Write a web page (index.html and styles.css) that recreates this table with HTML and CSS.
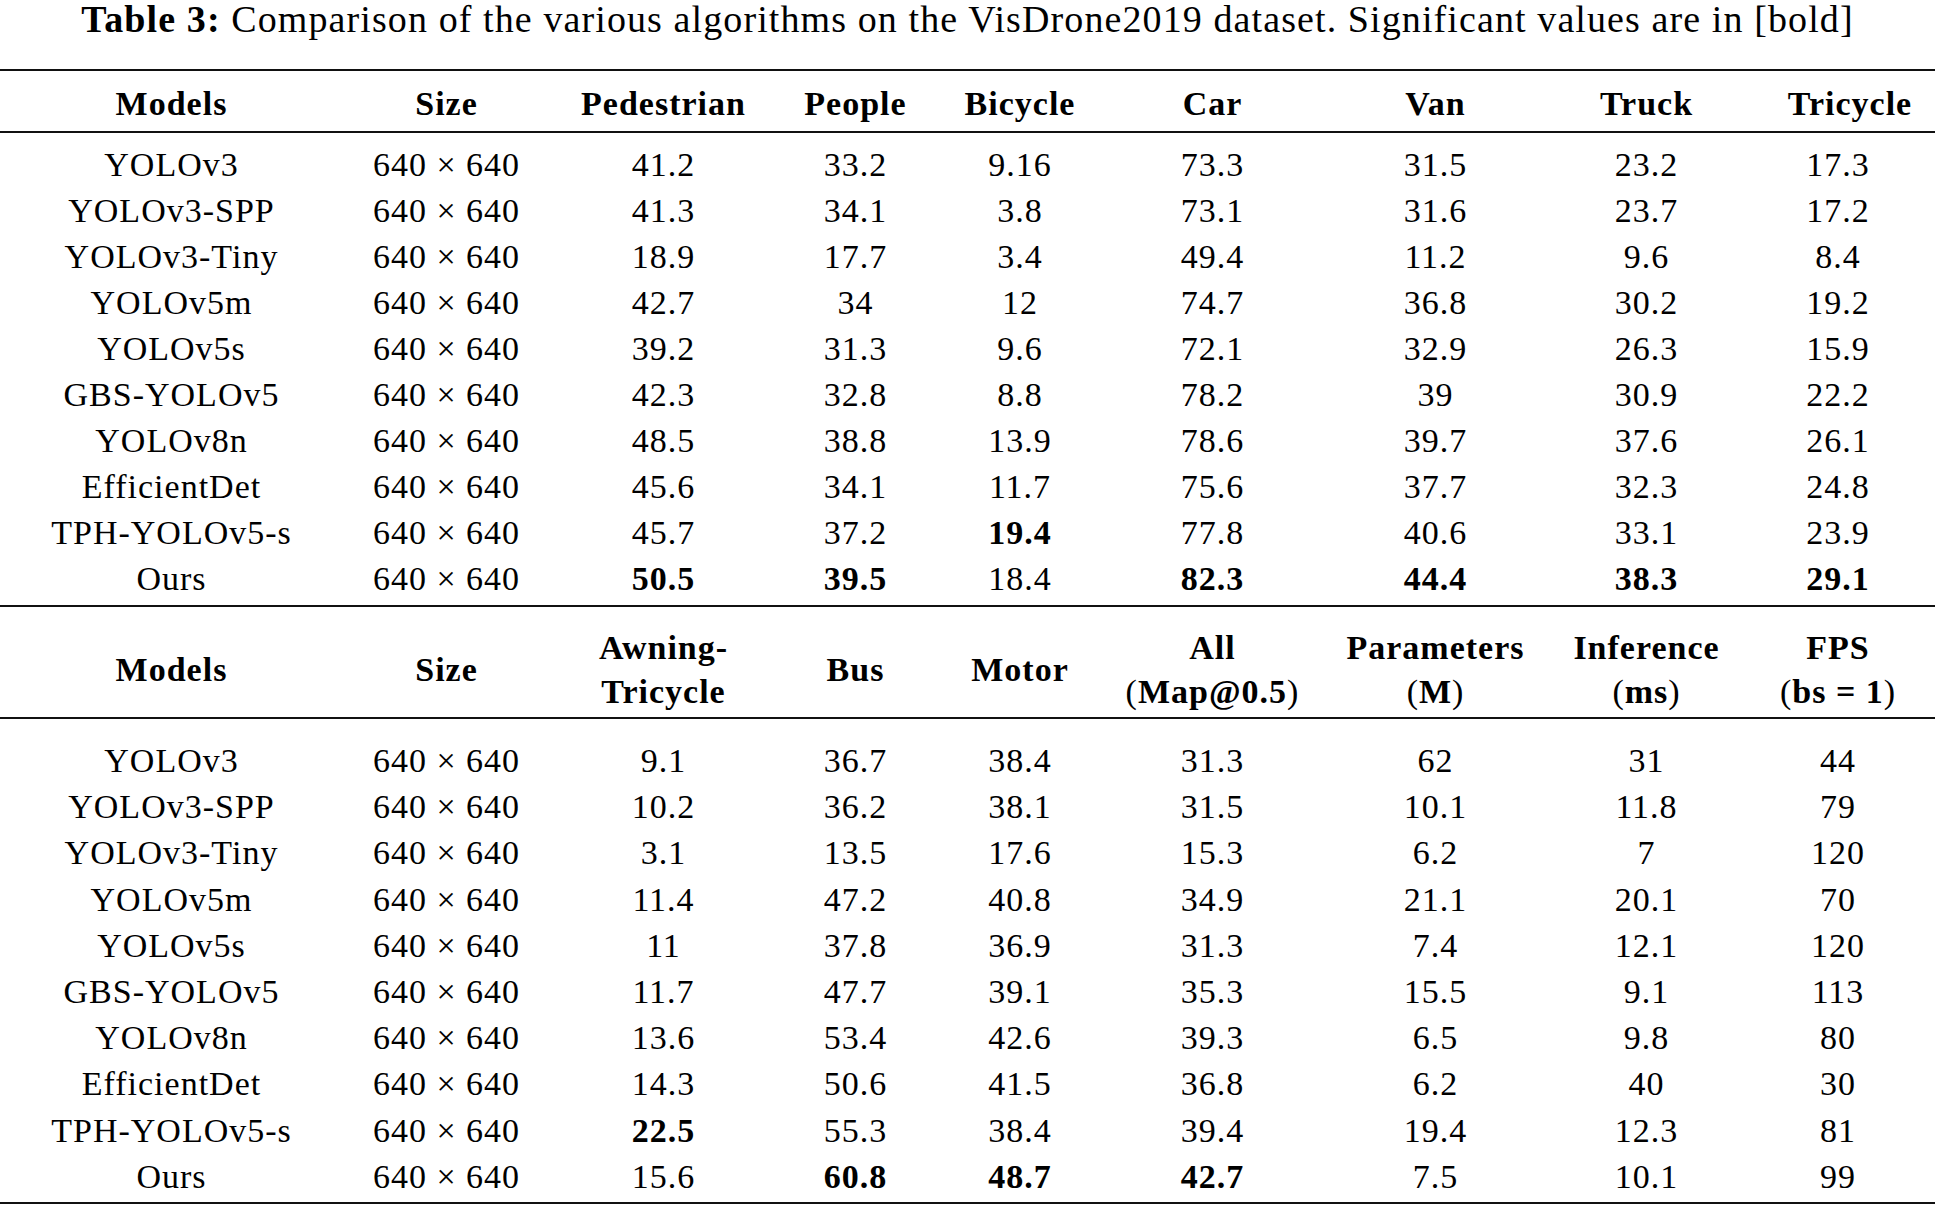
FILE: index.html
```html
<!DOCTYPE html>
<html lang="en">
<head>
<meta charset="utf-8">
<title>Table 3</title>
<link rel="stylesheet" href="styles.css">
</head>
<body>
<div class="caption"><b>Table 3:</b> Comparison of the various algorithms on the VisDrone2019 dataset. Significant values are in [bold]</div>
<table class="results">
  <colgroup>
    <col class="c-model"><col class="c-size"><col class="c-3"><col class="c-4"><col class="c-5"><col class="c-6"><col class="c-7"><col class="c-8"><col class="c-9">
  </colgroup>
  <tbody class="head head1">
    <tr><th>Models</th><th>Size</th><th>Pedestrian</th><th>People</th><th>Bicycle</th><th>Car</th><th>Van</th><th>Truck</th><th class="shift">Tricycle</th></tr>
  </tbody>
  <tbody class="body body1">
    <tr><td>YOLOv3</td><td>640 × 640</td><td>41.2</td><td>33.2</td><td>9.16</td><td>73.3</td><td>31.5</td><td>23.2</td><td>17.3</td></tr>
    <tr><td>YOLOv3-SPP</td><td>640 × 640</td><td>41.3</td><td>34.1</td><td>3.8</td><td>73.1</td><td>31.6</td><td>23.7</td><td>17.2</td></tr>
    <tr><td>YOLOv3-Tiny</td><td>640 × 640</td><td>18.9</td><td>17.7</td><td>3.4</td><td>49.4</td><td>11.2</td><td>9.6</td><td>8.4</td></tr>
    <tr><td>YOLOv5m</td><td>640 × 640</td><td>42.7</td><td>34</td><td>12</td><td>74.7</td><td>36.8</td><td>30.2</td><td>19.2</td></tr>
    <tr><td>YOLOv5s</td><td>640 × 640</td><td>39.2</td><td>31.3</td><td>9.6</td><td>72.1</td><td>32.9</td><td>26.3</td><td>15.9</td></tr>
    <tr><td>GBS-YOLOv5</td><td>640 × 640</td><td>42.3</td><td>32.8</td><td>8.8</td><td>78.2</td><td>39</td><td>30.9</td><td>22.2</td></tr>
    <tr><td>YOLOv8n</td><td>640 × 640</td><td>48.5</td><td>38.8</td><td>13.9</td><td>78.6</td><td>39.7</td><td>37.6</td><td>26.1</td></tr>
    <tr><td>EfficientDet</td><td>640 × 640</td><td>45.6</td><td>34.1</td><td>11.7</td><td>75.6</td><td>37.7</td><td>32.3</td><td>24.8</td></tr>
    <tr><td>TPH-YOLOv5-s</td><td>640 × 640</td><td>45.7</td><td>37.2</td><td class="best">19.4</td><td>77.8</td><td>40.6</td><td>33.1</td><td>23.9</td></tr>
    <tr><td>Ours</td><td>640 × 640</td><td class="best">50.5</td><td class="best">39.5</td><td>18.4</td><td class="best">82.3</td><td class="best">44.4</td><td class="best">38.3</td><td class="best">29.1</td></tr>
  </tbody>
  <tbody class="head head2">
    <tr><th>Models</th><th>Size</th><th>Awning-<br>Tricycle</th><th>Bus</th><th>Motor</th><th>All<br><span class="paren">(</span>Map@0.5<span class="paren">)</span></th><th>Parameters<br><span class="paren">(</span>M<span class="paren">)</span></th><th>Inference<br><span class="paren">(</span>ms<span class="paren">)</span></th><th>FPS<br><span class="paren">(</span>bs = 1<span class="paren">)</span></th></tr>
  </tbody>
  <tbody class="body body2">
    <tr><td>YOLOv3</td><td>640 × 640</td><td>9.1</td><td>36.7</td><td>38.4</td><td>31.3</td><td>62</td><td>31</td><td>44</td></tr>
    <tr><td>YOLOv3-SPP</td><td>640 × 640</td><td>10.2</td><td>36.2</td><td>38.1</td><td>31.5</td><td>10.1</td><td>11.8</td><td>79</td></tr>
    <tr><td>YOLOv3-Tiny</td><td>640 × 640</td><td>3.1</td><td>13.5</td><td>17.6</td><td>15.3</td><td>6.2</td><td>7</td><td>120</td></tr>
    <tr><td>YOLOv5m</td><td>640 × 640</td><td>11.4</td><td>47.2</td><td>40.8</td><td>34.9</td><td>21.1</td><td>20.1</td><td>70</td></tr>
    <tr><td>YOLOv5s</td><td>640 × 640</td><td>11</td><td>37.8</td><td>36.9</td><td>31.3</td><td>7.4</td><td>12.1</td><td>120</td></tr>
    <tr><td>GBS-YOLOv5</td><td>640 × 640</td><td>11.7</td><td>47.7</td><td>39.1</td><td>35.3</td><td>15.5</td><td>9.1</td><td>113</td></tr>
    <tr><td>YOLOv8n</td><td>640 × 640</td><td>13.6</td><td>53.4</td><td>42.6</td><td>39.3</td><td>6.5</td><td>9.8</td><td>80</td></tr>
    <tr><td>EfficientDet</td><td>640 × 640</td><td>14.3</td><td>50.6</td><td>41.5</td><td>36.8</td><td>6.2</td><td>40</td><td>30</td></tr>
    <tr><td>TPH-YOLOv5-s</td><td>640 × 640</td><td class="best">22.5</td><td>55.3</td><td>38.4</td><td>39.4</td><td>19.4</td><td>12.3</td><td>81</td></tr>
    <tr><td>Ours</td><td>640 × 640</td><td>15.6</td><td class="best">60.8</td><td class="best">48.7</td><td class="best">42.7</td><td>7.5</td><td>10.1</td><td>99</td></tr>
  </tbody>
</table>
</body>
</html>
```
FILE: styles.css
```css
html, body {
  margin: 0;
  padding: 0;
  background: #ffffff;
}

body {
  width: 1935px;
  color: #000;
  font-family: "Liberation Serif", "Times New Roman", serif;
  font-size: 34px;
}

.caption {
  height: 69px;
  box-sizing: border-box;
  text-align: center;
  font-size: 38px;
  line-height: 38px;
  letter-spacing: 1.1px;
  white-space: nowrap;
}

.results {
  width: 1935px;
  table-layout: fixed;
  border-collapse: collapse;
  border-top: 2px solid #111;
  border-bottom: 2px solid #111;
  letter-spacing: 1px;
}

.c-model { width: 343px; }
.c-size  { width: 207px; }
.c-3     { width: 227px; }
.c-4     { width: 157px; }
.c-5     { width: 172px; }
.c-6     { width: 213px; }
.c-7     { width: 233px; }
.c-8     { width: 189px; }
.c-9     { width: 194px; }

.results th,
.results td {
  padding: 0;
  text-align: center;
  vertical-align: middle;
  white-space: nowrap;
}

.results th {
  font-weight: bold;
}

.head {
  border-bottom: 2px solid #111;
}

.body1 {
  border-bottom: 2px solid #111;
}

.head1 th {
  line-height: 46px;
  padding-top: 10px;
  padding-bottom: 4px;
}

.head1 th.shift {
  padding-left: 24px;
}

.head2 th {
  line-height: 44px;
  padding-top: 19px;
  padding-bottom: 3px;
}

.paren {
  font-weight: normal;
}

.body1 td {
  line-height: 46px;
}

.body2 td {
  line-height: 46.2px;
}

.body1 tr:first-child td { padding-top: 9px; }
.body1 tr:last-child td  { padding-bottom: 3px; }
.body2 tr:first-child td { padding-top: 19px; }
.body2 tr:last-child td  { padding-bottom: 2px; }

.best {
  font-weight: bold;
}
```
